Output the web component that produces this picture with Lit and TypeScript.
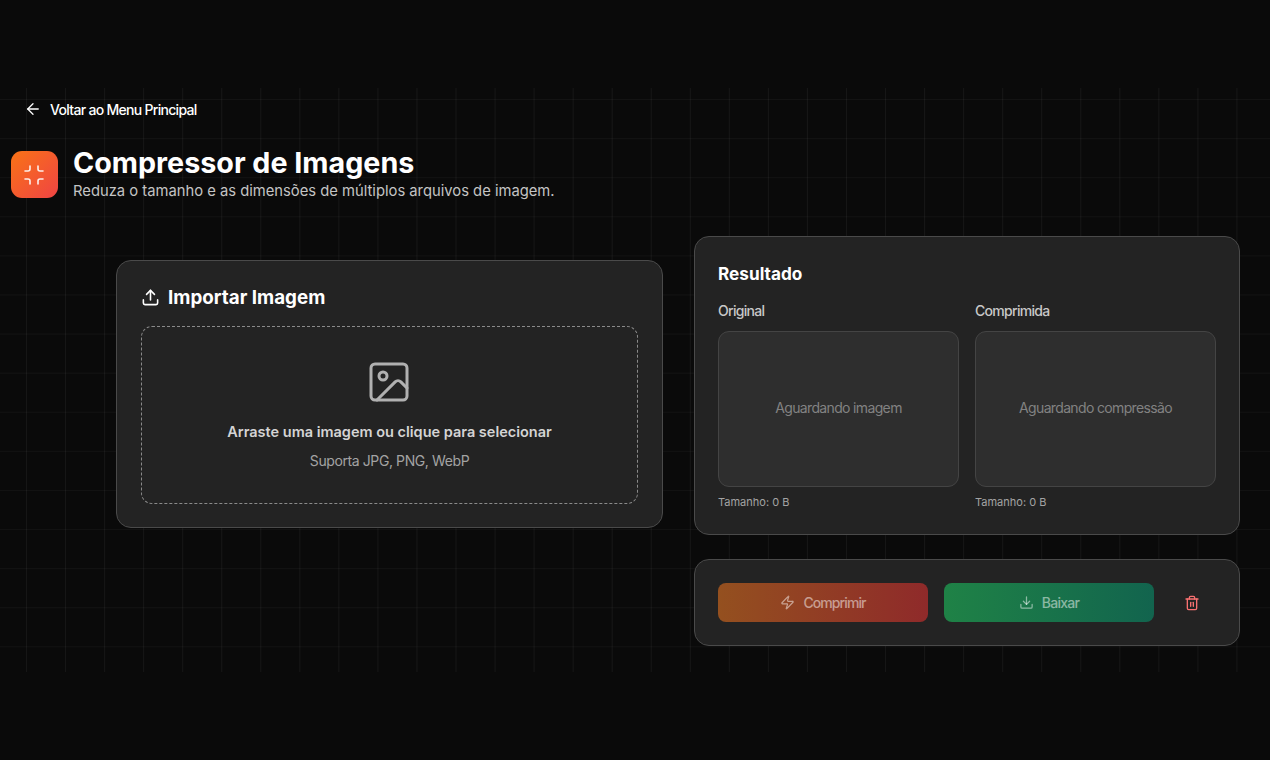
import { LitElement, html, css } from "lit";
import { customElement } from "lit/decorators.js";

@customElement("app-root")
export class AppRoot extends LitElement {
  static styles = css`
    :host { display: block; width: 1270px; height: 760px; overflow: hidden; position: relative; background: #0a0a0a; font-family: Inter, "Liberation Sans", sans-serif; color: #fff; }
    .grid { position: absolute; left: 0; right: 0; top: 88px; height: 584px; pointer-events: none;
      background-image: linear-gradient(to right, rgba(255,255,255,.05) 1px, transparent 1px), linear-gradient(to bottom, rgba(255,255,255,.035) 1px, transparent 1px);
      background-size: 39.05px 39.1px; background-position: 26px 11px; }
    .page { position: relative; padding: 87px 30px 0 10.5px; box-sizing: border-box; }
    .back { display: flex; align-items: center; gap: 8px; height: 44px; padding-left: 13.5px; font-size: 14px; letter-spacing: -0.7px; color: #fff; font-weight: 500; }
    .back svg { width: 18px; height: 18px; }
    .head { display: flex; align-items: center; gap: 16px; margin-top: 20px; height: 47px; }
    .logo { width: 47px; height: 47px; flex: none; border-radius: 11px; background: linear-gradient(135deg, #f97316, #ef4444); display: flex; align-items: center; justify-content: center; }
    .logo svg { width: 24px; height: 24px; opacity: .9; }
    .htext { padding-bottom: 2px; margin-left: -0.5px; }
    h1 { margin: 0; font-size: 28.7px; line-height: 30px; font-weight: 700; }
    .sub { margin-top: 5px; font-size: 14.78px; line-height: 17px; color: #c4c4c4; }
    .cols { display: grid; grid-template-columns: 547px 546px; gap: 31px; margin: 38px 0 0 105.5px; }
    .card { background: #232323; border: 1px solid #4a4a4a; border-radius: 15px; box-sizing: border-box; }
    .import { margin-top: 24px; height: 268px; padding: 24px 24px 0; align-self: start; }
    .title { display: flex; align-items: center; gap: 8px; font-size: 18.8px; font-weight: 700; height: 24px; }
    .title svg { width: 19px; height: 19px; }
    .drop { margin-top: 17px; height: 178px; border: 1px dashed #8a8a8a; border-radius: 11px; display: flex; flex-direction: column; align-items: center; box-sizing: border-box; }
    .drop svg { width: 48px; height: 48px; margin-top: 31px; margin-left: -1px; }
    .drop b { margin-top: 16px; font-size: 14.5px; font-weight: 600; color: #d4d4d4; line-height: 20px; }
    .drop span { margin-top: 10px; font-size: 14px; letter-spacing: -0.4px; color: #a3a3a3; line-height: 18px; }
    .right { display: flex; flex-direction: column; gap: 24px; }
    .result { height: 299px; padding: 24px 23px; }
    .rt { font-size: 17.2px; font-weight: 700; line-height: 26px; }
    .panes { display: grid; grid-template-columns: 241px 241px; gap: 16px; margin-top: 14px; }
    .lbl { font-size: 14px; letter-spacing: -0.7px; color: #c8c8c8; line-height: 20px; font-weight: 500; }
    .box { margin-top: 10px; height: 156px; padding-bottom: 4px; border-radius: 11px; background: #2e2e2e; border: 1px solid #444; box-sizing: border-box; display: flex; align-items: center; justify-content: center; font-size: 14px; letter-spacing: -0.65px; color: #828282; }
    .size { margin-top: 7px; font-size: 11px; color: #a3a3a3; line-height: 16px; }
    .actions { height: 87px; padding: 24px 23px; display: flex; align-items: center; gap: 16px; }
    .btn { width: 210px; height: 39px; border-radius: 8px; display: flex; align-items: center; justify-content: center; gap: 8px; font-size: 14px; letter-spacing: -0.7px; font-weight: 500; color: rgba(255,255,255,.5); }
    .btn svg { width: 15px; height: 15px; }
    .c { background: linear-gradient(90deg, #94501f, #8f2a2a); letter-spacing: -0.9px; }
    .b { background: linear-gradient(90deg, #1f8246, #12644e); }
    .trash { width: 16px; height: 16px; margin-left: 14px; }
  `;
  render() {
    return html`
      <div class="grid"></div>
      <div class="page">
        <div class="back">
          <svg viewBox="0 0 24 24" fill="none" stroke="#fff" stroke-width="1.7" stroke-linecap="round" stroke-linejoin="round"><path d="m12 19-7-7 7-7"/><path d="M19 12H5"/></svg>
          Voltar ao Menu Principal
        </div>
        <div class="head">
          <div class="logo">
            <svg viewBox="0 0 24 24" fill="none" stroke="#fff" stroke-width="1.6" stroke-linecap="round" stroke-linejoin="round"><path d="M8 3v3a2 2 0 0 1-2 2H3"/><path d="M21 8h-3a2 2 0 0 1-2-2V3"/><path d="M3 16h3a2 2 0 0 1 2 2v3"/><path d="M16 21v-3a2 2 0 0 1 2-2h3"/></svg>
          </div>
          <div class="htext">
            <h1>Compressor de Imagens</h1>
            <div class="sub">Reduza o tamanho e as dimensões de múltiplos arquivos de imagem.</div>
          </div>
        </div>
        <div class="cols">
          <div class="card import">
            <div class="title">
              <svg viewBox="0 0 24 24" fill="none" stroke="#fff" stroke-width="2" stroke-linecap="round" stroke-linejoin="round"><path d="M21 15v4a2 2 0 0 1-2 2H5a2 2 0 0 1-2-2v-4"/><path d="m17 8-5-5-5 5"/><path d="M12 3v12"/></svg>
              Importar Imagem
            </div>
            <div class="drop">
              <svg viewBox="0 0 24 24" fill="none" stroke="#b0b0b0" stroke-width="1.5" stroke-linecap="round" stroke-linejoin="round"><rect x="3" y="3" width="18" height="18" rx="2"/><circle cx="9" cy="9" r="2"/><path d="m21 15-3.09-3.09a2 2 0 0 0-2.82 0L6 21"/></svg>
              <b>Arraste uma imagem ou clique para selecionar</b>
              <span>Suporta JPG, PNG, WebP</span>
            </div>
          </div>
          <div class="right">
            <div class="card result">
              <div class="rt">Resultado</div>
              <div class="panes">
                <div><div class="lbl">Original</div><div class="box">Aguardando imagem</div><div class="size">Tamanho: 0 B</div></div>
                <div><div class="lbl">Comprimida</div><div class="box">Aguardando compressão</div><div class="size">Tamanho: 0 B</div></div>
              </div>
            </div>
            <div class="card actions">
              <div class="btn c"><svg viewBox="0 0 24 24" fill="none" stroke="currentColor" stroke-width="2" stroke-linecap="round" stroke-linejoin="round"><path d="M4 14a1 1 0 0 1-.78-1.63l9.9-10.2a.5.5 0 0 1 .86.46l-1.92 6.02A1 1 0 0 0 13 10h7a1 1 0 0 1 .78 1.63l-9.9 10.2a.5.5 0 0 1-.86-.46l1.92-6.02A1 1 0 0 0 11 14z"/></svg>Comprimir</div>
              <div class="btn b"><svg viewBox="0 0 24 24" fill="none" stroke="currentColor" stroke-width="2" stroke-linecap="round" stroke-linejoin="round"><path d="M21 15v4a2 2 0 0 1-2 2H5a2 2 0 0 1-2-2v-4"/><path d="m7 10 5 5 5-5"/><path d="M12 15V3"/></svg>Baixar</div>
              <svg class="trash" viewBox="0 0 24 24" fill="none" stroke="#f87171" stroke-width="2" stroke-linecap="round" stroke-linejoin="round"><path d="M3 6h18"/><path d="M19 6v14a2 2 0 0 1-2 2H7a2 2 0 0 1-2-2V6"/><path d="M8 6V4a2 2 0 0 1 2-2h4a2 2 0 0 1 2 2v2"/><path d="M10 11v6"/><path d="M14 11v6"/></svg>
            </div>
          </div>
        </div>
      </div>
    `;
  }
}
